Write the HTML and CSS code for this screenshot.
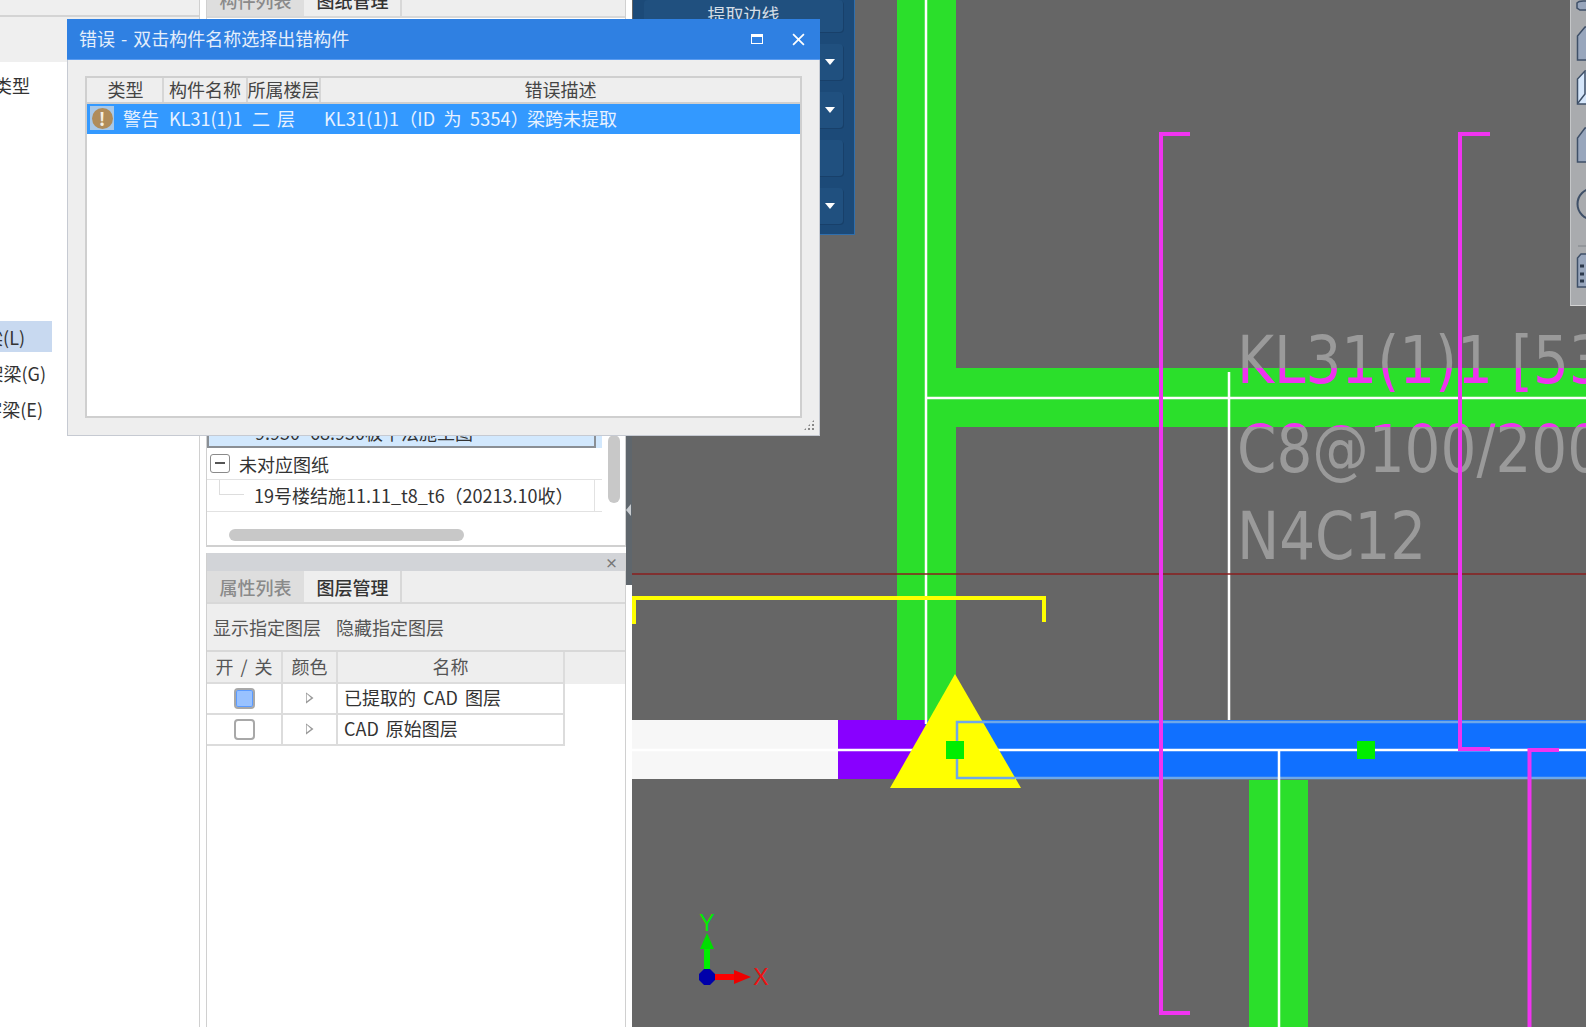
FILE: index.html
```html
<!DOCTYPE html>
<html lang="zh-CN">
<head>
<meta charset="utf-8">
<title>错误 - 双击构件名称选择出错构件</title>
<link rel="stylesheet" href="styles.css">
</head>
<body>
<div class="app">
  <aside class="nav">
    <div class="nav-top"></div>
    <div class="nav-head"></div>
    <div class="nav-list">
      <div class="nav-item nav-type"><span>构件类型</span></div>
      <div class="nav-item nav-sel"><span>框架梁(L)</span></div>
      <div class="nav-item"><span>非框架梁(G)</span></div>
      <div class="nav-item"><span>井字梁(E)</span></div>
    </div>
  </aside>

  <section class="panel">
    <div class="pane-top">
      <div class="tabs tabs-clipped">
        <div class="tab tab-off">构件列表</div>
        <div class="tab tab-on">图纸管理</div>
      </div>
      <div class="tree">
        <div class="tree-row tree-sel"><span class="tree-sel-cell">9.950~68.950板平法施工图</span></div>
        <div class="tree-row tree-group"><span class="minus"></span><span>未对应图纸</span></div>
        <div class="tree-row tree-file"><span class="elbow"></span><span class="tree-file-cell">19号楼结施11.11_t8_t6（20213.10收）</span></div>
        <div class="vscroll"></div>
      </div>
      <div class="hscroll-track"><div class="hscroll"></div></div>
    </div>
    <div class="pane-gap"></div>
    <div class="pane-bottom">
      <div class="pane-head"><span class="pane-close">×</span></div>
      <div class="tabs">
        <div class="tab tab-off">属性列表</div>
        <div class="tab tab-on">图层管理</div>
      </div>
      <div class="layer-tools"><span>显示指定图层</span><span>隐藏指定图层</span></div>
      <div class="layer-table">
        <div class="layer-row layer-head">
          <div class="c-switch">开 / 关</div><div class="c-color">颜色</div><div class="c-name c-center">名称</div>
        </div>
        <div class="layer-row">
          <div class="c-switch"><span class="check check-on"></span></div>
          <div class="c-color"><span class="tri"></span></div>
          <div class="c-name">已提取的 CAD 图层</div>
        </div>
        <div class="layer-row">
          <div class="c-switch"><span class="check"></span></div>
          <div class="c-color"><span class="tri"></span></div>
          <div class="c-name">CAD 原始图层</div>
        </div>
      </div>
    </div>
  </section>

  <div class="strip">
    <div class="strip-top"></div>
    <div class="strip-dark"><span class="strip-arrow"></span></div>
  </div>

  <main class="canvas">
    <svg class="drawing" viewBox="632 0 954 1027" xmlns="http://www.w3.org/2000/svg">
      <defs>
        <clipPath id="beamClip"><rect x="955" y="368" width="631" height="59"/></clipPath>
        <g id="labels" class="cad-text" transform="translate(43.300 0) scale(.965 1)">
          <text x="1237" y="383">KL31(1)1 [5354]</text>
          <text x="1237" y="472">C8@100/200(2)</text>
          <text x="1237" y="559">N4C12</text>
        </g>
      </defs>
      <rect x="632" y="0" width="954" height="1027" fill="#666666"/>
      <use href="#labels" fill="#9a9a9a"/>
      <rect x="897" y="0" width="59" height="720" fill="#2bdf2b"/>
      <rect x="956" y="368" width="630" height="59" fill="#2bdf2b"/>
      <rect x="1249" y="780" width="59" height="247" fill="#2bdf2b"/>
      <use href="#labels" fill="#ee33ee" clip-path="url(#beamClip)"/>
      <rect x="632" y="720" width="206" height="59" fill="#f7f7f7"/>
      <rect x="838" y="720" width="90" height="59" fill="#8800ff"/>
      <rect x="925" y="720" width="661" height="59" fill="#1070ff"/>
      <path d="M1586 722H957V778H1586" fill="none" stroke="#6fa8e8" stroke-width="2.500"/>
      <path d="M926 0V724M926 398H1586M1229 372V720M632 750H1586M1279 750V1027" fill="none" stroke="#ffffff" stroke-width="2.500"/>
      <path d="M632 574H1586" stroke="#8a1f1f" stroke-width="1.500"/>
      <path d="M634 624V598H1044V622" fill="none" stroke="#ffff00" stroke-width="4"/>
      <path d="M1190 134H1161V1013H1190M1490 134H1460V749H1490M1559 750H1529.500V1027" fill="none" stroke="#f033f0" stroke-width="4"/>
      <path d="M955 674L1021 788H890Z" fill="#ffff00"/>
      <path d="M985 722H957V778H1015" fill="none" stroke="#6fa8e8" stroke-width="2.500"/>
      <rect x="946" y="741" width="18" height="18" fill="#00ee00"/>
      <rect x="1357" y="741" width="18" height="18" fill="#00ee00"/>
      <rect x="704" y="945" width="6" height="30" fill="#00ee00"/>
      <path d="M707 933L714 949H700Z" fill="#00dd00"/>
      <rect x="714" y="974" width="22" height="6" fill="#ff0000"/>
      <path d="M751 977L734 970V984Z" fill="#ee0000"/>
      <path d="M704 969H710L715 974V980L710 985H704L699 980V974Z" fill="#0000aa"/>
      <text class="axis" x="707" y="931" fill="#00ee00">Y</text>
      <text class="axis" x="761" y="985" fill="#ee1111">X</text>
    </svg>

    <div class="cmd-panel">
      <div class="cmd cmd-first"><span class="cmd-label">提取边线</span></div>
      <div class="cmd"><span class="cmd-arrow"></span></div>
      <div class="cmd"><span class="cmd-arrow"></span></div>
      <div class="cmd"></div>
      <div class="cmd"><span class="cmd-arrow"></span></div>
    </div>

    <div class="view-tools">
      <svg class="view-icons" viewBox="0 0 16 306" xmlns="http://www.w3.org/2000/svg">
        <g fill="#98a6bc" stroke="#3f5068" stroke-width="1.500">
          <path d="M6 3C8 0 12 1 16 1V10H9L6 8Z"/>
          <path d="M6.500 60V36L14 27H18V60Z"/>
          <path d="M6.500 104V79L14 71H18V104Z" fill="#d5e6fa"/>
          <path d="M14 72V94L7 103" fill="none"/>
          <path d="M6.500 162V138L14 128H18V162Z"/>
          <circle cx="22" cy="204" r="15.500" fill="none" stroke-width="2"/>
          <path d="M6.500 287V258L10 254H18V287Z"/>
        </g>
        <path d="M7 246H16" stroke="#7f8388" stroke-width="1"/>
        <path d="M9 266H13M9 274H13M9 281H13" stroke="#2d3a4d" stroke-width="3"/>
      </svg>
    </div>
  </main>

  <div class="dialog">
    <header class="dlg-title">
      <span class="dlg-text">错误 - 双击构件名称选择出错构件</span>
      <div class="dlg-btns">
        <span class="dlg-max"></span>
        <svg class="dlg-close" viewBox="0 0 12 12" xmlns="http://www.w3.org/2000/svg"><path d="M1 1L11 11M11 1L1 11" stroke="#ffffff" stroke-width="1.600"/></svg>
      </div>
    </header>
    <div class="dlg-body">
      <div class="err-list">
        <div class="err-head">
          <div class="eh eh-type">类型</div>
          <div class="eh eh-name">构件名称</div>
          <div class="eh eh-floor">所属楼层</div>
          <div class="eh eh-desc">错误描述</div>
        </div>
        <div class="err-row">
          <span class="warn-tile"><span class="warn-dot">!</span></span>
          <span class="er-type">警告</span>
          <span class="er-name">KL31(1)1</span>
          <span class="er-floor">二 层</span>
          <span class="er-id">KL31(1)1（ID 为 5354）</span>
          <span class="er-desc">梁跨未提取</span>
        </div>
      </div>
      <div class="grip"></div>
    </div>
  </div>
</div>
</body>
</html>
```
FILE: styles.css
```css
* { box-sizing: border-box; }
html, body { margin: 0; padding: 0; background: #fff; }
body {
  font-family: "Noto Sans CJK SC", "Noto Sans", sans-serif;
  font-size: 18px;
  color: #333;
  line-height: 1;
}
.app {
  position: relative;
  display: flex;
  width: 1586px;
  height: 1027px;
  overflow: hidden;
}

/* left navigation */
.nav {
  width: 200px;
  flex: none;
  border-right: 1px solid #d0d0d0;
  display: flex;
  flex-direction: column;
}
.nav-top { height: 17px; background: #efefef; border-bottom: 2px solid #d4d4d4; }
.nav-head { height: 45px; background: #efefef; }
.nav-list { flex: 1; padding-top: 7px; width: 52px; }
.nav-item {
  height: 36px;
  display: flex;
  justify-content: flex-end;
  align-items: center;
  overflow: hidden;
  white-space: nowrap;
  padding-right: 6px;
}
.nav-item span { flex: none; }
.nav-type { margin-bottom: 220px; height: 32px; padding-right: 22px; }
.nav-sel { background: #c8d9f0; height: 31px; margin-bottom: 3px; padding-right: 0; }
.nav-sel span { margin-right: 27px; }
.nav-item:last-child span { margin-right: 3px; }

/* middle panel */
.panel {
  width: 420px;
  margin-left: 6px;
  flex: none;
  display: flex;
  flex-direction: column;
}
.pane-top {
  height: 547px;
  display: flex;
  flex-direction: column;
  border-left: 1px solid #d0d0d0;
  border-right: 1px solid #d0d0d0;
  border-bottom: 2px solid #d0d0d0;
}
.tabs {
  display: flex;
  height: 33px;
  background: #eee;
  border-bottom: 2px solid #d8d8d8;
  flex: none;
}
.tab {
  width: 97px;
  display: flex;
  align-items: center;
  justify-content: center;
  margin-right: 1px;
  font-weight: 500;
  overflow: hidden;
}
.tab-off { background: #dedede; color: #8a8a8a; }
.tab-on { background: #eee; color: #333; border-right: 2px solid #d8d8d8; width: 97px; }
.tabs-clipped { height: 18px; align-items: flex-end; }
.tabs-clipped .tab { height: 16px; padding-bottom: 3px; align-items: flex-end; line-height: 26px; }
.tree {
  position: relative;
  flex: 1;
  padding-top: 399px;
  background: #fff;
  overflow: hidden;
}
.tree-row { display: flex; align-items: center; white-space: nowrap; width: 395px; }
.tree-sel { height: 31px; background: #d2e8fd; }
.tree-sel-cell {
  width: 389px;
  height: 31px;
  padding-left: 46px;
  line-height: 31px;
  border: 2px solid #8a8f95;
  border-top: 0;
  font-size: 18px;
}
.tree-group { height: 32px; border-bottom: 1px solid #e2e2e2; margin-top: 0; gap: 9px; padding-left: 3px; }
.minus {
  position: relative;
  width: 20px;
  height: 19px;
  border: 1.500px solid #8a8a8a;
  border-radius: 3px;
  flex: none;
}
.minus::after {
  content: "";
  position: absolute;
  left: 4px;
  right: 4px;
  top: 7px;
  height: 1.500px;
  background: #555;
}
.tree-file { height: 32px; border-bottom: 1px solid #e2e2e2; position: relative; padding-left: 47px; }
.tree-file-cell { width: 341px; border-right: 1px solid #e2e2e2; height: 31px; line-height: 31px; }
.elbow {
  position: absolute;
  left: 12px;
  top: 0;
  width: 25px;
  height: 15px;
  border-left: 1px solid #ddd;
  border-bottom: 1px solid #ddd;
}
.vscroll {
  position: absolute;
  left: 401px;
  top: 417px;
  width: 12px;
  height: 68px;
  border-radius: 6px;
  background: #c8c8c8;
}
.hscroll-track { height: 32px; background: #fff; padding: 16px 0 0 22px; flex: none; }
.hscroll { width: 235px; height: 12px; border-radius: 6px; background: #c8c8c8; }
.pane-gap { height: 6px; flex: none; }
.pane-bottom {
  flex: 1;
  display: flex;
  flex-direction: column;
  border-left: 1px solid #d0d0d0;
  border-right: 1px solid #d0d0d0;
}
.pane-head {
  height: 18px;
  background: #d2d4d8;
  display: flex;
  justify-content: flex-end;
  align-items: center;
  padding-right: 7px;
  flex: none;
}
.pane-close { color: #777; font-size: 13px; font-weight: 700; }
.layer-tools {
  height: 48px;
  display: flex;
  align-items: center;
  gap: 15px;
  padding-left: 6px;
  background: #eee;
  border-bottom: 2px solid #d8d8d8;
  color: #555;
  flex: none;
}
.layer-table { flex: 1; background: #fff; word-spacing: 3px; }
.layer-row { display: flex; height: 31px; }
.layer-head { background: #eee; height: 32px; color: #555; }
.layer-row > div {
  display: flex;
  align-items: center;
  border-right: 2px solid #dcdcdc;
  border-bottom: 2px solid #dcdcdc;
  padding-bottom: 3px;
}
.c-switch { width: 76px; justify-content: center; }
.c-color { width: 55px; justify-content: center; }
.c-name { width: 227px; padding-left: 6px; }
.c-center { justify-content: center; padding-left: 0; }
.check {
  width: 21px;
  height: 21px;
  border: 2px solid #a8a8a8;
  border-radius: 4px;
  background: #fff;
  position: relative;
  top: 1px;
}
.check-on { background: #99c2ff; box-shadow: inset 0 0 0 1px #5b9bff; }
.tri {
  width: 8px;
  height: 12px;
  background: #9a9a9a;
  position: relative;
  top: 1px;
  clip-path: polygon(0 0, 100% 50%, 0 100%, 0 85%, 70% 50%, 15% 15%, 15% 85%, 0 85%);
}

/* divider strip */
.strip { width: 6px; flex: none; display: flex; flex-direction: column; }
.strip-top { height: 19px; }
.strip-dark {
  height: 566px;
  background: #5f666c;
  position: relative;
}
.strip-arrow {
  position: absolute;
  left: 0;
  top: 485px;
  border: 6px solid transparent;
  border-left-width: 0;
  border-right: 5px solid #c8ccd0;
}

/* drawing canvas */
.canvas { position: relative; flex: 1; overflow: hidden; }
.drawing { display: block; width: 954px; height: 1027px; }
.cad-text {
  font-family: "DejaVu Sans", sans-serif;
  font-stretch: condensed;
  font-size: 65px;
}
.axis { font-family: "Liberation Sans", sans-serif; font-size: 23px; text-anchor: middle; }
.cmd-panel {
  position: absolute;
  left: 1px;
  top: 0;
  width: 222px;
  height: 235px;
  padding: 0 11px;
  display: flex;
  flex-direction: column;
  gap: 12px;
  background: #1c4a78;
  border-right: 1px solid #2f6fae;
  border-bottom: 1px solid #2f6fae;
}
.cmd {
  height: 36px;
  background: #20507f;
  border-radius: 4px;
  box-shadow: 1px 1px 0 #18406a;
  display: flex;
  align-items: center;
  justify-content: flex-end;
  padding-right: 8px;
  position: relative;
}
.cmd-first { height: 32px; justify-content: center; padding-right: 0; }
.cmd-label { color: #d4dde6; font-size: 18px; position: relative; top: -2px; left: 0; }
.cmd-arrow {
  border-left: 5px solid transparent;
  border-right: 5px solid transparent;
  border-top: 6px solid #fff;
}
.view-tools {
  position: absolute;
  right: 0;
  top: 0;
  width: 16px;
  height: 306px;
  background: #a9abae;
  border-left: 1px solid #c4c6c8;
  border-bottom: 1px solid #d4d4d4;
}
.view-icons { display: block; width: 16px; height: 306px; }

/* dialog window */
.dialog {
  position: absolute;
  left: 67px;
  top: 19px;
  width: 753px;
  height: 417px;
  display: flex;
  flex-direction: column;
  background: #eee;
  border: 1px solid #c6cad2;
  border-top: 0;
}
.dlg-title {
  height: 41px;
  margin: 0 -1px;
  padding: 0 0 0 12px;
  display: flex;
  align-items: center;
  justify-content: space-between;
  flex: none;
  background: #2f80e2;
  border-bottom: 1px solid #5b9cf0;
  color: #e4eefb;
}
.dlg-text { word-spacing: 2px; position: relative; top: -1px; }
.dlg-btns { display: flex; align-items: center; gap: 29px; padding-right: 15px; }
.dlg-max {
  width: 12px;
  height: 10px;
  border: 1.500px solid #fff;
  border-top-width: 3px;
}
.dlg-close { width: 13px; height: 13px; display: block; }
.dlg-body { position: relative; flex: 1; padding: 16px 17px 17px; }
.err-list {
  height: 342px;
  display: flex;
  flex-direction: column;
  background: #fff;
  border: 2px solid #cfcfcf;
}
.err-head {
  height: 26px;
  display: flex;
  background: #eee;
  border-bottom: 2px solid #cfcfcf;
  color: #444;
  flex: none;
}
.eh {
  display: flex;
  align-items: center;
  justify-content: center;
  border-right: 2px solid #d6d6d6;
  white-space: nowrap;
  padding-bottom: 2px;
}
.eh-type { width: 77px; padding-left: 2px; }
.eh-name { width: 84px; }
.eh-floor { width: 73px; }
.eh-desc { flex: 1; border-right: 0; }
.err-row {
  height: 30px;
  display: flex;
  align-items: center;
  background: #3399ff;
  color: #e8f2ff;
  white-space: nowrap;
  padding: 0 0 2px 3px;
}
.warn-tile {
  width: 24px;
  height: 24px;
  background: #a8c8e8;
  display: flex;
  align-items: center;
  justify-content: center;
  flex: none;
}
.warn-dot {
  width: 21px;
  height: 21px;
  border-radius: 50%;
  background: #b08c5a;
  color: #f6f0e4;
  font-weight: 700;
  font-size: 18px;
  line-height: 21px;
  text-align: center;
}
.er-type { width: 46px; margin-left: 9px; flex: none; }
.er-name { width: 83px; flex: none; }
.er-floor { width: 72px; flex: none; word-spacing: 3px; }
.er-id { width: 203px; flex: none; word-spacing: 4px; letter-spacing: .2px; }
.grip {
  position: absolute;
  right: 4px;
  bottom: 4px;
  width: 12px;
  height: 12px;
  background:
    radial-gradient(circle, #888 1.300px, transparent 1.500px) 0 0 / 4px 4px;
  clip-path: polygon(100% 0, 100% 100%, 0 100%);
}
```
